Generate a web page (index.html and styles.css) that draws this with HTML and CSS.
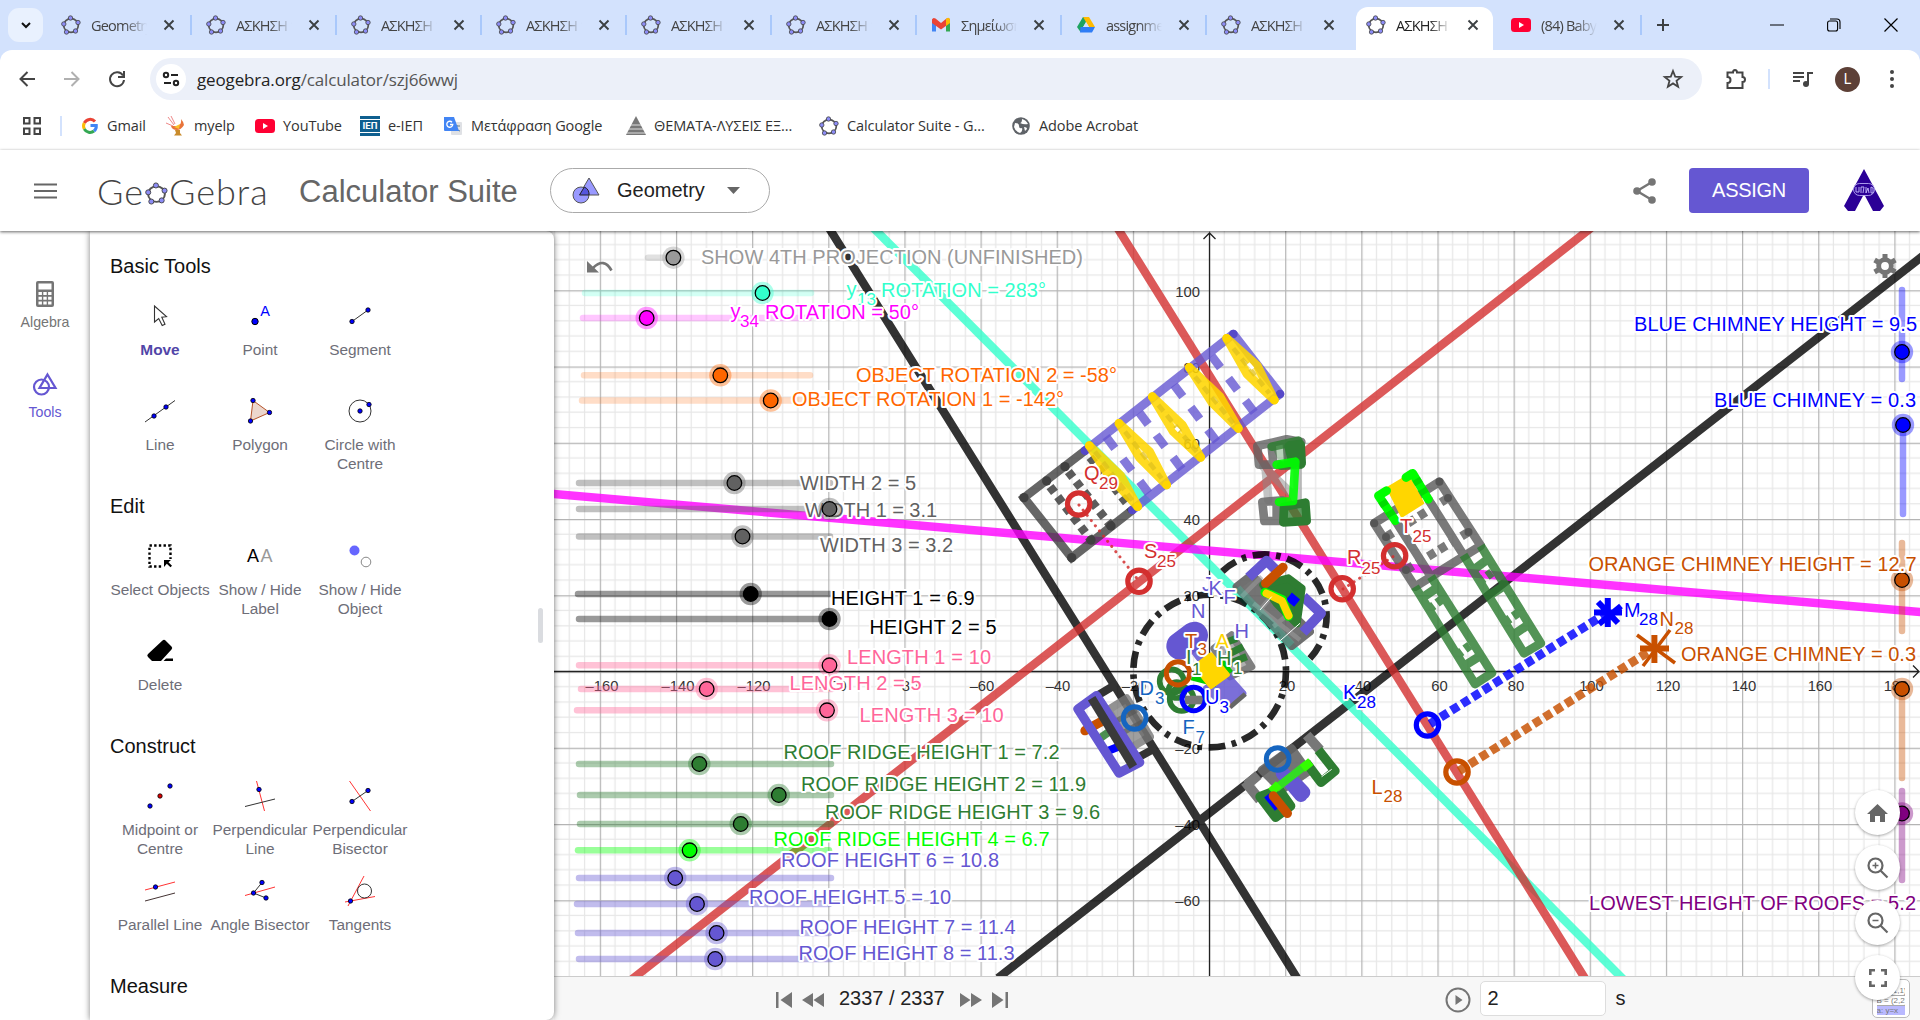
FILE: index.html
```html
<!DOCTYPE html>
<html lang="en">
<head>
<meta charset="utf-8">
<title>GeoGebra Calculator Suite</title>
<link rel="stylesheet" href="styles.css">
</head>
<body>
<svg class="defs" width="0" height="0">
  <symbol id="ggb" viewBox="0 0 20 20">
    <ellipse cx="10" cy="10.5" rx="7.3" ry="6.8" fill="none" stroke="#555" stroke-width="1.7"/>
    <g fill="#8c8cf5" stroke="#444" stroke-width=".8"><circle cx="9.5" cy="3" r="2.2"/><circle cx="17" cy="7.5" r="2.2"/><circle cx="14.5" cy="16" r="2.2"/><circle cx="5.5" cy="17" r="2.2"/><circle cx="2.8" cy="9" r="2.2"/></g>
  </symbol>
  <symbol id="yt" viewBox="0 0 20 20"><rect y="3" width="20" height="14" rx="3.5" fill="#ff0033"/><path d="M8 7v6l5-3z" fill="#fff"/></symbol>
  <symbol id="close" viewBox="0 0 12 12"><path d="M1.5 1.5l9 9M10.5 1.5l-9 9" stroke="#3c4043" stroke-width="1.9"/></symbol>
  <symbol id="knob" viewBox="0 0 24 24"><circle cx="12" cy="12" r="11.2" fill="currentColor" opacity=".4"/><circle cx="12" cy="12" r="7.3" fill="currentColor" stroke="#000" stroke-width="1.3"/></symbol>
  <symbol id="dot" viewBox="0 0 6 6"><circle cx="3" cy="3" r="2.2" fill="#00f" stroke="#000" stroke-width=".8"/></symbol>
</svg>

<div class="tabstrip">
  <div class="search-tabs"><svg width="12" height="12" viewBox="0 0 12 12"><path d="M2 4l4 4 4-4" fill="none" stroke="#111" stroke-width="2"/></svg></div>
  <div class="tabs">
    <div class="tab"><svg class="fav"><use href="#ggb"/></svg><span>Geometry</span><svg class="x"><use href="#close"/></svg></div>
    <div class="tab"><svg class="fav"><use href="#ggb"/></svg><span>ΑΣΚΗΣΗ 1</span><svg class="x"><use href="#close"/></svg></div>
    <div class="tab"><svg class="fav"><use href="#ggb"/></svg><span>ΑΣΚΗΣΗ 1</span><svg class="x"><use href="#close"/></svg></div>
    <div class="tab"><svg class="fav"><use href="#ggb"/></svg><span>ΑΣΚΗΣΗ 1</span><svg class="x"><use href="#close"/></svg></div>
    <div class="tab"><svg class="fav"><use href="#ggb"/></svg><span>ΑΣΚΗΣΗ 1</span><svg class="x"><use href="#close"/></svg></div>
    <div class="tab"><svg class="fav"><use href="#ggb"/></svg><span>ΑΣΚΗΣΗ 1</span><svg class="x"><use href="#close"/></svg></div>
    <div class="tab"><svg class="fav" viewBox="0 0 20 20"><path d="M1 4v12.500h4V9z" fill="#4285f4"/><path d="M19 4v12.500h-4V9z" fill="#34a853"/><path d="M1 8V4.500Q2 2 4.500 3.500L10 8l5.500-4.500Q18 2 19 4.500V8l-9 6.500z" fill="#ea4335"/><path d="M15 4q3-2.500 4 .5V8l-4 3z" fill="#fbbc04"/></svg><span>Σημείωση</span><svg class="x"><use href="#close"/></svg></div>
    <div class="tab"><svg class="fav" viewBox="0 0 20 20"><path d="M7 2h6l-8.500 15L1 12z" fill="#1ea362"/><path d="M7 2h6l6 10h-6z" fill="#ffba00"/><path d="M4.500 12H19l-3 5.500H4z" fill="#2f7df6"/><path d="M10 7l3 5H7z" fill="#d3e2fd"/></svg><span>assignments</span><svg class="x"><use href="#close"/></svg></div>
    <div class="tab"><svg class="fav"><use href="#ggb"/></svg><span>ΑΣΚΗΣΗ 1</span><svg class="x"><use href="#close"/></svg></div>
    <div class="tab active"><svg class="fav"><use href="#ggb"/></svg><span>ΑΣΚΗΣΗ 1</span><svg class="x"><use href="#close"/></svg></div>
    <div class="tab"><svg class="fav"><use href="#yt"/></svg><span>(84) Baby</span><svg class="x"><use href="#close"/></svg></div>
  </div>
  <svg class="plus" width="14" height="14" viewBox="0 0 14 14"><path d="M7 1v12M1 7h12" stroke="#3c4043" stroke-width="2"/></svg>
  <div class="winctl">
    <svg width="14" height="14" viewBox="0 0 14 14"><path d="M0 7h14" stroke="#000"/></svg>
    <svg width="14" height="14" viewBox="0 0 14 14" fill="none" stroke="#000" stroke-width="1.100"><rect x=".6" y="3" width="10" height="10" rx="2"/><path d="M3 1h7q3 0 3 3v7"/></svg>
    <svg width="14" height="14" viewBox="0 0 14 14"><path d="M.5.5l13 13M13.500.5l-13 13" stroke="#000" stroke-width="1.200"/></svg>
  </div>
</div>

<div class="toolbar">
  <div class="nav">
    <svg width="18" height="18" viewBox="0 0 18 18"><path d="M9.500 2L2.500 9l7 7M2.500 9H17" fill="none" stroke="#444" stroke-width="2"/></svg>
    <svg width="18" height="18" viewBox="0 0 18 18"><path d="M8.500 2l7 7-7 7M15.500 9H1" fill="none" stroke="#b0b0b0" stroke-width="2"/></svg>
    <svg width="18" height="18" viewBox="0 0 18 18"><path d="M15 5.500A7 7 0 1 0 16 10M16 1v6h-6" fill="none" stroke="#444" stroke-width="2"/></svg>
  </div>
  <div class="omnibox">
    <div class="site"><svg width="18" height="16" viewBox="0 0 18 16" fill="none" stroke="#222" stroke-width="2"><circle cx="4" cy="4" r="2.200"/><path d="M9 4h7M2 12h7"/><circle cx="14" cy="12" r="2.200"/></svg></div>
    <span class="url">geogebra.org<i>/calculator/szj66wwj</i></span>
    <svg class="star" width="20" height="20" viewBox="0 0 20 20"><path d="M10 2l2.200 5.600 6 .4-4.700 3.800 1.600 5.900L10 14.400l-5.100 3.300 1.600-5.900L1.800 8l6-.4z" fill="none" stroke="#444" stroke-width="1.800"/></svg>
  </div>
  <div class="actions">
    <svg width="22" height="22" viewBox="0 0 22 22"><path d="M2.500 4.500H8Q8 2 10 2t2 2.500h5.500V9Q20 9 20 11.500T17.500 14v6H2.500v-5q3 0 3-3t-3-3z" fill="none" stroke="#444" stroke-width="2"/></svg>
    <b class="vsep"></b>
    <svg class="music" width="20" height="18" viewBox="0 0 20 18"><path d="M0 3h11M0 7h11M0 11h7" stroke="#444" stroke-width="2"/><path d="M15 14V3h5" fill="none" stroke="#444" stroke-width="2"/><circle cx="13" cy="14" r="3" fill="#444"/></svg>
    <b class="avatar">L</b>
    <svg class="dots" width="6" height="20" viewBox="0 0 6 20" fill="#444"><circle cx="3" cy="3" r="2"/><circle cx="3" cy="10" r="2"/><circle cx="3" cy="17" r="2"/></svg>
  </div>
</div>

<div class="bookmarks">
  <svg class="apps" width="18" height="18" viewBox="0 0 18 18" fill="none" stroke="#444" stroke-width="2"><path d="M1 1h5.500v5.500H1zM11.500 1H17v5.500h-5.500zM1 11.500h5.500V17H1zM11.500 11.500H17V17h-5.500z"/></svg>
  <b class="vsep"></b>
  <svg class="b1" width="16" height="16" viewBox="0 0 16 16" fill="none" stroke-width="3"><path d="M13 3.500A6.500 6.500 0 0 0 2.300 5" stroke="#ea4335"/><path d="M2.300 5a6.500 6.500 0 0 0 0 6" stroke="#fbbc05"/><path d="M2.300 11A6.500 6.500 0 0 0 12 13" stroke="#34a853"/><path d="M12 13q2.500-2 2.300-5.500H8.500" stroke="#4285f4"/></svg>
  <span class="w1">Gmail</span>
  <svg class="b2" width="20" height="20" viewBox="0 0 20 20"><path d="M2 1l6 8M5 0l4 8M0 7l7 3" stroke="#e88" stroke-width="1"/><path d="M5 10q1 4 6 4 4 0 7-5-1-4-3-6 1 5-3 7-4 0-7 0z" fill="#e8743a"/><path d="M8 11l6-3-1 5z" fill="#fbc02d"/><path d="M9 14h5v3l2 2.500H8l2-2.500z" fill="#c98b2b"/></svg>
  <span class="w2">myelp</span>
  <svg class="b3" width="20" height="20"><use href="#yt"/></svg>
  <span class="w3">YouTube</span>
  <em class="iep">ΙΕΠ</em>
  <span class="w4">e-ΙΕΠ</span>
  <svg class="b5" width="20" height="20" viewBox="0 0 20 20"><rect x="8" y="6" width="11" height="13" rx="1" fill="#dfe1e5"/><path d="M11 10h6M14 9q0 4-3 6M12 11q2 4 5 4" stroke="#607d8b" fill="none"/><path d="M1 1h10l5 14H2q-1 0-1-1z" fill="#4285f4"/><path d="M9 6.200a3 3 0 1 0 .8 2.300H7" fill="none" stroke="#fff" stroke-width="1.300"/></svg>
  <span class="w5">Μετάφραση Google</span>
  <svg class="b6" width="20" height="20" viewBox="0 0 20 20"><path d="M10 0l10 19H0z" fill="#777"/><path d="M5 9h10M3 13h14M1 17h18" stroke="#ddd" stroke-width="1"/></svg>
  <span class="w6">ΘΕΜΑΤΑ-ΛΥΣΕΙΣ ΕΞ...</span>
  <svg class="b7" width="20" height="20"><use href="#ggb"/></svg>
  <span class="w7">Calculator Suite - G...</span>
  <svg class="b8" width="18" height="18" viewBox="0 0 18 18"><circle cx="9" cy="9" r="8.800" fill="#5f6368"/><path d="M3 6q4 0 4 3t3 2q1 3-2 5-5-2-6-6zM10 2q0 4-2 4 4 2 8 1-2-4-6-5zM12 10q3 0 3 2l-2 2z" fill="#fff"/></svg>
  <span class="w8">Adobe Acrobat</span>
</div>

<header class="appbar">
  <svg class="burger" width="23" height="16" viewBox="0 0 23 16"><path d="M0 1.500h23M0 8h23M0 14.500h23" stroke="#666" stroke-width="2.200"/></svg>
  <div class="logo"><span>Ge</span><svg width="23" height="23"><use href="#ggb"/></svg><span>Gebra</span></div>
  <h1>Calculator Suite</h1>
  <div class="picker">
    <svg width="28" height="27" viewBox="0 0 28 27" stroke="#555"><path d="M17 1l10 17H7z" fill="#9999ff"/><circle cx="9" cy="18" r="8" fill="#9999ff"/><path d="M12.300 10A8 8 0 0 1 17 18H7.500z" fill="#5555dd" stroke="#222"/></svg>
    <span>Geometry</span>
    <svg width="13" height="7" viewBox="0 0 13 7"><path d="M0 0h13L6.500 7z" fill="#666"/></svg>
  </div>
  <svg class="share" width="23" height="26" viewBox="0 0 23 26"><path d="M19 4L4 13l15 9" fill="none" stroke="#757575" stroke-width="2.400"/><g fill="#757575"><circle cx="19" cy="4" r="3.800"/><circle cx="4" cy="13" r="3.800"/><circle cx="19" cy="22" r="3.800"/></g></svg>
  <button class="assign">ASSIGN</button>
  <svg class="brand" width="40" height="43" viewBox="0 0 40 43"><path d="M20 0l20 37-4 5h-7l-9-17-9 17H4l-4-5z" fill="#2b0096"/><rect x="9.500" y="14.500" width="21" height="12" rx="6" fill="#2b0096" stroke="#c9bfff" stroke-width=".8"/><path d="M12 18v5h3v-5M17 24v-6h3l-1 6M22 18v6l2-5 1 5M27 18v6h2v-5z" fill="none" stroke="#c9bfff" stroke-width=".9"/></svg>
</header>

<main class="app">
  <nav class="rail">
    <div class="rail-item"><svg width="18" height="26" viewBox="0 0 18 26"><rect width="18" height="26" rx="2" fill="#757575"/><path d="M2.500 2.500h13v6h-13zM2.500 11h3.400v3H2.500zM7.300 11h3.400v3H7.300zM12.100 11h3.400v3h-3.400zM2.500 15.700h3.400v3H2.500zM7.300 15.700h3.400v3H7.300zM12.100 15.700h3.400v3h-3.400zM2.500 20.500h3.400v3H2.500zM7.300 20.500h3.400v3H7.300zM12.100 20.500h3.400v3h-3.400z" fill="#fff"/></svg><span>Algebra</span></div>
    <div class="rail-item on"><svg width="25" height="26" viewBox="0 0 25 26" fill="none" stroke="#6557d2" stroke-width="2.200"><circle cx="8.500" cy="16" r="7.500"/><path d="M14.500 3.500l8 13.500h-16z"/></svg><span>Tools</span></div>
  </nav>

  <aside class="panel">
    <section><h2>Basic Tools</h2><div class="grid">
      <div class="tool sel"><svg viewBox="0 0 32 32"><path d="M10.500 6v16l4.200-3.500 3.500 7 2.800-1.300-3.200-7 4.700-.5z" fill="#fff" stroke="#333" stroke-width="1.100"/></svg><span>Move</span></div>
      <div class="tool"><svg viewBox="0 0 32 32"><circle cx="11" cy="21.500" r="3.200" fill="#00f" stroke="#000"/><text x="16.300" y="16" class="ia">A</text></svg><span>Point</span></div>
      <div class="tool"><svg viewBox="0 0 32 32"><path d="M8 21.500L24 10" stroke="#333"/><use href="#dot" x="5" y="18.500" width="6" height="6"/><use href="#dot" x="21" y="7" width="6" height="6"/></svg><span>Segment</span></div>
      <div class="tool"><svg viewBox="0 0 32 32"><path d="M1 27L31 5.500" stroke="#333"/><use href="#dot" x="7" y="18" width="6" height="6"/><use href="#dot" x="19" y="9" width="6" height="6"/></svg><span>Line</span></div>
      <div class="tool"><svg viewBox="0 0 32 32"><path d="M9 5.500l16.500 12L6.500 26z" fill="#ecd6cd" stroke="#b5532a"/><use href="#dot" x="6" y="2.500" width="6" height="6"/><use href="#dot" x="22.500" y="14.500" width="6" height="6"/><use href="#dot" x="3.500" y="23" width="6" height="6"/></svg><span>Polygon</span></div>
      <div class="tool"><svg viewBox="0 0 32 32"><circle cx="16" cy="16" r="11" fill="none" stroke="#333"/><use href="#dot" x="13" y="13" width="6" height="6"/><use href="#dot" x="22" y="6.500" width="6" height="6"/></svg><span>Circle with<br>Centre</span></div>
    </div></section>
    <section><h2>Edit</h2><div class="grid">
      <div class="tool"><svg viewBox="0 0 32 32"><path d="M5.500 5.500h21v21h-21z" fill="none" stroke="#000" stroke-width="2.400" stroke-dasharray="2.400 2.270"/><path d="M19 19h10v10H19z" fill="#fff"/><path d="M20 20h7l-2.500 2.200 3.500 3.600-1.500 1.500-3.700-3.600L20 27z" fill="#000"/></svg><span>Select Objects</span></div>
      <div class="tool"><svg viewBox="0 0 32 32"><text x="3" y="22" class="aa">A</text><text x="16.500" y="22" class="aa g">A</text></svg><span>Show / Hide<br>Label</span></div>
      <div class="tool"><svg viewBox="0 0 32 32"><circle cx="10.500" cy="10.500" r="5" fill="#66f"/><circle cx="22" cy="22" r="4.800" fill="#fff" stroke="#888"/></svg><span>Show / Hide<br>Object</span></div>
      <div class="tool"><svg viewBox="0 0 32 32"><path d="M18.500 5.500q1.500-1.500 3 0l6 6q1.500 1.500 0 3L17 26H8l-4-4q-1.500-1.500 0-3z" fill="#000"/><path d="M22 23.500h7V26h-9.500z" fill="#000"/></svg><span>Delete</span></div>
    </div></section>
    <section><h2>Construct</h2><div class="grid">
      <div class="tool"><svg viewBox="0 0 32 32"><use href="#dot" x="3" y="23" width="6" height="6"/><circle cx="16" cy="16" r="2.200" fill="#d00" stroke="#000" stroke-width=".8"/><use href="#dot" x="23" y="3" width="6" height="6"/></svg><span>Midpoint or<br>Centre</span></div>
      <div class="tool"><svg viewBox="0 0 32 32"><path d="M12.500 1l8 30" stroke="#f33"/><path d="M1 26.500L31 19" stroke="#333"/><use href="#dot" x="12" y="6.500" width="6" height="6"/></svg><span>Perpendicular<br>Line</span></div>
      <div class="tool"><svg viewBox="0 0 32 32"><path d="M5.500 1l21 30" stroke="#f33"/><path d="M8 21.500L24 10.500" stroke="#333"/><use href="#dot" x="5" y="18.500" width="6" height="6"/><use href="#dot" x="21" y="7.500" width="6" height="6"/></svg><span>Perpendicular<br>Bisector</span></div>
      <div class="tool"><svg viewBox="0 0 32 32"><path d="M1 15L31 7" stroke="#f33"/><path d="M1 26L31 18" stroke="#433"/><use href="#dot" x="8.500" y="9" width="6" height="6"/></svg><span>Parallel Line</span></div>
      <div class="tool"><svg viewBox="0 0 32 32"><path d="M1 20.500L31 12" stroke="#f33"/><path d="M18 7.500L9.500 18l12.500 5" stroke="#333" fill="none"/><use href="#dot" x="15" y="4.500" width="6" height="6"/><use href="#dot" x="6.500" y="15" width="6" height="6"/><use href="#dot" x="19" y="20" width="6" height="6"/></svg><span>Angle Bisector</span></div>
      <div class="tool"><svg viewBox="0 0 32 32"><path d="M20 1L4 31M1 27l30-5.500" stroke="#f33"/><circle cx="20.500" cy="16" r="7" fill="none" stroke="#333"/><use href="#dot" x="3.500" y="23" width="6" height="6"/></svg><span>Tangents</span></div>
    </div></section>
    <section><h2>Measure</h2></section>
    <i class="thumb"></i>
  </aside>

  <div class="view">
    <svg class="graph" width="1366" height="745" viewBox="554 231 1366 745">
      <defs>
        <pattern id="grid" patternUnits="userSpaceOnUse" x="1209" y="671.500" width="76.150" height="76.250">
          <path d="M15.230 0V77M30.460 0V77M45.690 0V77M60.920 0V77M0 15.250H77M0 30.500H77M0 45.750H77M0 61H77" stroke="#000" stroke-opacity=".095" stroke-width="1.200"/>
          <path d="M.5 0V77M0 .5H77" stroke="#b4b4b4" stroke-width="1.400"/>
        </pattern>
      </defs>
      <rect x="554" y="231" width="1366" height="745" fill="#fff"/>
      <rect x="554" y="231" width="1366" height="745" fill="url(#grid)"/>
      <path d="M554 671.500H1919M1209.500 233V976M1203.500 239l6-6 6 6M1913 665.500l6 6-6 6" fill="none" stroke="#222" stroke-width="1.300"/>
      <g class="ax mid">
        <text x="602" y="691">–160</text><text x="678" y="691">–140</text><text x="754" y="691">–120</text><text x="830" y="691">–100</text><text x="906" y="691">–80</text><text x="982" y="691">–60</text><text x="1058" y="691">–40</text><text x="1134" y="691">–20</text><text x="1287" y="691">20</text><text x="1363" y="691">40</text><text x="1439.500" y="691">60</text><text x="1516" y="691">80</text><text x="1591.500" y="691">100</text><text x="1668" y="691">120</text><text x="1744" y="691">140</text><text x="1820" y="691">160</text><text x="1896" y="691">180</text>
      </g>
      <g class="ax end">
        <text x="1200" y="296.500">100</text><text x="1200" y="372.500">80</text><text x="1200" y="448.500">60</text><text x="1200" y="524.500">40</text><text x="1200" y="600.500">20</text><text x="1200" y="754">–20</text><text x="1200" y="830">–40</text><text x="1200" y="906">–60</text>
      </g>

      <g class="lines">
        <path d="M829 228L1297 978M998 978L1924 255" stroke="#000"/>
        <path d="M873.500 228L1624 980" stroke="#3fc"/>
        <path d="M1117.500 228L1586 980M1591 228L631 980" stroke="#d32f2f"/>
        <path d="M550 493.600L1924 612.400" stroke="#f0f"/>
      </g>

      <!-- elongated roof and its base -->
      <g transform="translate(1000 320) scale(.33333)" fill="none" stroke-width="26">
        <path d="M255 392L72 533l143 180 182-143" stroke="#404040" opacity=".8"/>
        <g stroke="#404040" opacity=".85" stroke-dasharray="22 16" stroke-width="26"><path d="M150 500l123 160M205 455l128 163M270 412l127 158"/></g>
        <g fill="#404040" stroke="none"><circle cx="72" cy="533" r="14"/><circle cx="215" cy="713" r="14"/><circle cx="195" cy="440" r="14"/><circle cx="140" cy="483" r="14"/><circle cx="273" cy="660" r="14"/><circle cx="333" cy="618" r="14"/></g>
        <path d="M255 392L700 42l140 180-443 348" stroke="#6557d2" opacity=".8" stroke-linejoin="round"/>
        <g fill="#5648c8" stroke="none"><circle cx="255" cy="392" r="13"/><circle cx="700" cy="42" r="13"/><circle cx="840" cy="222" r="13"/><circle cx="397" cy="570" r="13"/></g>
        <path d="M318 350l130 172M418 278l130 172M522 195l130 172M635 108l130 172" stroke="#6557d2" opacity=".8" stroke-dasharray="44 40"/>
        <g stroke="#ffd600" fill="#ffe04a" fill-opacity=".55" stroke-width="26" stroke-linejoin="round" opacity=".87">
          <path d="M268 377l94 90 51 93-88-95zM357 310l92 85 51 100-82-83zM457 230l90 85 55 97-82-77zM568 142l92 88 55 95-79-77zM680 55l92 82 51 103-82-78z"/>
        </g>
        <g stroke="#d8ba1c" stroke-width="14" stroke-dasharray="24 16" opacity=".6"><path d="M285 395l115 150M375 335l110 140M475 255l115 140M585 170l115 140M700 85l108 135"/></g>
        <path d="M527 323l10 10M745 130l14 16" stroke="#fff" stroke-width="10"/>
        <g stroke="#ffd600" stroke-width="26" stroke-linecap="round"><path d="M268 377h.1M413 560h.1M357 310h.1M500 495h.1M457 230h.1M602 412h.1M568 142h.1M715 325h.1M680 55h.1M823 240h.1"/></g>

        <!-- small house with lime ridge -->
        <g stroke-linejoin="round" stroke-linecap="round">
          <path d="M797 445l8 95M893 440v100M790 440l100 95" stroke="#888" opacity=".5"/>
          <path d="M772 378l88-20 44 8M772 378l5 56h60M860 360l5 70M815 380l5 50" stroke="#616161" opacity=".8"/>
          <path d="M787 546l6 57h60M787 546l60-5M830 550v50" stroke="#707070" opacity=".9"/>
          <path d="M815 380l80-18 8 72-60 3" stroke="#2e7d32" fill="#2e7d32" fill-opacity=".4" opacity=".85"/>
          <path d="M870 378l30-4 3 55M868 380l12 50" stroke="#2e7d32" stroke-width="30"/>
          <path d="M852 560l64-12 4 55-70 4z" stroke="#2e7d32" fill="#2e7d32" fill-opacity=".75"/>
          <path d="M830 434l56-9-7 118-42 3" stroke="#0f0" opacity=".9"/>
        </g>
      </g>

      <!-- houses round the origin -->
      <g transform="translate(1060 540) scale(.33333)" fill="none" stroke-linejoin="round">
        <g stroke="#000" stroke-opacity=".84" stroke-width="20" stroke-dasharray="50 20 14 20">
          <circle cx="449" cy="393" r="229"/>
          <path d="M487 94A184 184 0 0 1 742 363"/>
        </g>
        <g stroke-width="24">
          <path d="M530 140l45-35 175 170-55 43z" fill="#666" stroke="#616161" opacity=".9"/>
          <path d="M545 170l60-60M600 210l50-60M640 260l60-50M580 190l140 110" stroke="#999" opacity=".6" stroke-width="14"/>
          <path d="M532 145L695 315" stroke="#3fc" opacity=".2"/>
          <path d="M566 112l54-50 33 33M730 170l53 50-54 57" stroke="#6557d2" stroke-width="30"/>
          <path d="M610 135l75-20 40 30-15 105-60-60z" fill="#2e7d32" stroke="#2e7d32"/>
          <path d="M617 130l52-48" stroke="#c85000" stroke-linecap="round" stroke-width="28"/>
          <path d="M690 190l18-22" stroke="#00f" stroke-width="32"/>
          <path d="M615 157l52 22 18 50" stroke="#0f0" stroke-linecap="round" stroke-width="27"/><path d="M619 160l47 23 20 44" stroke="#ffd600" stroke-linecap="round" stroke-width="23"/>
          <path d="M600 210l35-40M640 320l80-70" stroke="#fff" stroke-width="3"/>
        </g>
        <path d="M360 318l43-32" stroke="#6557d2" stroke-width="82" stroke-linecap="round"/>
        <g stroke-width="22">
          <path d="M462 325l53-40 60 95-65 30z" stroke="#616161" fill="#9a9a9a" opacity=".8"/>
          <path d="M490 310l40-15M500 345l50-25M510 370l50-20" stroke="#2e7d32"/>
          <path d="M400 330l70 90M440 445l60 55 48-40-45-50z" stroke="#6557d2" fill="#6557d2" opacity=".85"/>
          <path d="M510 502l46-40" stroke="#666" stroke-width="14"/>
          <path d="M395 410l75 20M470 350l40 50" stroke="#0c0"/>
          <path d="M405 380l48-36 50 60-50 36z" fill="#ffd600" stroke="#ffd600" stroke-width="14"/>
        </g>
        <g stroke-width="15">
          <g stroke="#2e7d32" stroke-width="17"><circle cx="335" cy="424" r="36"/><circle cx="365" cy="477" r="36"/><circle cx="350" cy="450" r="24"/></g>
          <path d="M375 480h55" stroke="#777" stroke-width="26"/>
          <circle cx="354" cy="400" r="35" stroke="#c85000"/><circle cx="401" cy="477" r="35" stroke="#00f"/>
        </g>

        <!-- left house -->
        <g stroke-width="24">
          <path d="M115 465l50-30M230 655l58-32" stroke="#333"/>
          <path d="M145 510l55-35 70 115-60 35z" fill="#888" stroke="#777" opacity=".8"/><path d="M165 545l65-35M185 580l65-35" stroke="#555" stroke-width="16" opacity=".6"/>
          <path d="M75 572l50-28" stroke="#c85000" stroke-width="28" stroke-linecap="round"/>
          <path d="M105 605l50-35" stroke="#2e7d32" stroke-opacity=".85"/><path d="M145 632l30-12" stroke="#00f"/>
          <path d="M54 507l55-40 130 200-62 32z" stroke="#6557d2" stroke-width="28"/>
          <path d="M95 475l125 205" stroke="#3a3a3a" stroke-width="26"/>
        </g>
        <!-- lower right house -->
        <g stroke-width="24">
          <path d="M605 690l90-65 50 70-80 55z" fill="#666" stroke="#666" opacity=".9"/>
          <path d="M555 725l45 55M740 585l40 45M560 735l35-30" stroke="#777" stroke-width="30"/>
          <path d="M690 715l40 42M668 700l55 65" stroke="#6557d2" stroke-width="42" stroke-linecap="round"/>
          <path d="M600 770l47 62 45-34-35-50z" fill="#2e7d32" stroke="#2e7d32" stroke-width="28"/>
          <path d="M775 630l50 63-42 34-45-60" stroke="#2e7d32" stroke-width="28"/>
          <path d="M785 710l30-22" stroke="#fff" stroke-width="3"/>
          <path d="M648 745l92-72" stroke="#33dd22"/>
          <path d="M636 735l18 18M732 665l16 20" stroke="#3f0" stroke-width="32"/>
          <path d="M622 765l32 40" stroke="#00f" stroke-width="24"/>
          <path d="M640 768l42 52" stroke="#c85000" stroke-width="28" stroke-linecap="round"/>
        </g>
        <g stroke="#1565c0" stroke-width="15"><circle cx="224" cy="534" r="34"/><circle cx="653" cy="657" r="34"/></g>
      </g>

      <!-- right house with ladders -->
      <g fill="none" stroke-width="8.800" stroke-linejoin="round">
        <g stroke="#555" opacity=".78">
          <path d="M1439.400 481.700L1374.300 523.300L1415 586.700L1480.700 545.700Z"/><path d="M1395.400 520.700L1431 576.700M1428.300 499.300L1463.500 555"/>
          <path d="M1386 537L1448 498M1406 570L1468.500 532" stroke-dasharray="8 5"/>
        </g>
        <g fill="#555"><circle cx="1439.400" cy="481.700" r="4"/><circle cx="1374.300" cy="523.300" r="4"/><circle cx="1448" cy="498" r="4"/><circle cx="1468.500" cy="532" r="4"/><circle cx="1386" cy="537" r="4"/><circle cx="1406" cy="570" r="4"/></g>
        <g stroke="#2e7d32" opacity=".82">
          <path d="M1415 586.700L1475 684L1492 673L1431 576.700M1463.500 555L1524 653.300L1540.800 643.300L1480.700 545.700"/>
          <path d="M1422 598L1438 587M1464 666L1480 656M1472 571L1488 559M1487 597L1504 586M1513 635L1528 625"/>
          <path d="M1429 609L1445 597M1457 655L1473 643M1479 582L1494 571M1505 622L1521 611" stroke-dasharray="6 4"/>
        </g>
        <path d="M1388 488l20-12 14.600 27-20.600 13z" fill="#ffd600" stroke="#ffd600" stroke-width="3"/>
        <path d="M1395.400 520.700L1378.500 495.700l8-5M1406 477.500l6.600-4.200L1428.300 499.300" stroke="#0f0" stroke-linecap="round"/>
        <path d="M1382 501l3 5M1389 511l3 5M1416 479l3 5M1422 489l3 5" stroke="#0b0" opacity=".5"/>
      </g>

      <g fill="none" stroke-width="8.800" opacity=".82"><path d="M1430 724L1607.800 612.300" stroke="#00f" stroke-dasharray="8.400 4.200"/><path d="M1459 771L1654.400 648.300" stroke="#c85000" stroke-dasharray="8.400 4.200"/></g>
      <path d="M1607.800 598v29M1594 612.500h28M1598 602l20 21M1599 624l22-18" stroke="#00f" stroke-width="6"/>
      <path d="M1654.400 635v28M1640 648.500h29" stroke="#c85000" stroke-width="6"/><path d="M1637 635l38 28M1670 630l-27 36" stroke="#c85000" stroke-width="3.500"/>
      <g fill="none" stroke-width="5.200">
        <g stroke="#d32f2f"><circle cx="1078.700" cy="504" r="11.200"/><circle cx="1139" cy="581.300" r="11.200"/><circle cx="1342.200" cy="588.700" r="11.200"/><circle cx="1394.600" cy="555.700" r="11.200"/></g>
        <circle cx="1427.500" cy="725" r="11.200" stroke="#00f"/><circle cx="1457" cy="772" r="11.200" stroke="#c85000"/>
      </g>
      <path d="M1079 505L1139 581M1343 589L1394 556" stroke="#d32f2f" stroke-width="3" stroke-linecap="round" stroke-dasharray=".1 6.500" opacity=".85"/>

      <g class="tracks">
        <g class="lt"><path d="M648 257.700H673" stroke="#777"/><path d="M585 293H811" stroke="#3fc"/><path d="M583 318H809" stroke="#f0f"/><path d="M584 375.300H810M582 400.500H808" stroke="#f60"/></g>
        <path d="M579 483H830M579 509H830M579 536.500H830" stroke="#616161"/><path d="M578 594H830M579 619H830" stroke="#000"/>
        <path d="M579 665.300H830M581 689H832M577 710.300H828" stroke="#f69"/>
        <path d="M579 764H831M580 795H831M580 824H831" stroke="#2e7d32"/><path d="M578 850.300H829" stroke="#0f0"/>
        <path d="M579 878H831M577 904H829M578 933H829M579 959H831" stroke="#6557d2"/>
        <path d="M1902 290V379M1903 425V514" stroke="#00f"/><path d="M1902 543V631M1902 689V778" stroke="#c85000"/><path d="M1902 791V880" stroke="#800080"/>
      </g>
      <g>
        <use href="#knob" class="c-g9" x="661.400" y="245.700" width="24" height="24"/>
        <use href="#knob" class="c-cy" x="750.500" y="281" width="24" height="24"/>
        <use href="#knob" class="c-mg" x="634.700" y="306" width="24" height="24"/>
        <use href="#knob" class="c-or" x="708.300" y="363.300" width="24" height="24"/>
        <use href="#knob" class="c-or" x="758.700" y="388.500" width="24" height="24"/>
        <use href="#knob" class="c-gr" x="722.400" y="471" width="24" height="24"/>
        <use href="#knob" class="c-gr" x="730.500" y="524.500" width="24" height="24"/>
        <use href="#knob" class="c-bk" x="738.700" y="582" width="24" height="24"/>
        <use href="#knob" class="c-bk" x="817.500" y="607" width="24" height="24"/>
        <use href="#knob" class="c-pk" x="817.500" y="653.300" width="24" height="24"/>
        <use href="#knob" class="c-pk" x="694.700" y="677" width="24" height="24"/>
        <use href="#knob" class="c-pk" x="815" y="698.300" width="24" height="24"/>
        <use href="#knob" class="c-gn" x="687.300" y="752" width="24" height="24"/>
        <use href="#knob" class="c-gn" x="766.800" y="783" width="24" height="24"/>
        <use href="#knob" class="c-gn" x="728.700" y="812" width="24" height="24"/>
        <use href="#knob" class="c-lm" x="677.600" y="838.300" width="24" height="24"/>
        <use href="#knob" class="c-pu" x="663.200" y="866" width="24" height="24"/>
        <use href="#knob" class="c-pu" x="685" y="892" width="24" height="24"/>
        <use href="#knob" class="c-pu" x="704.600" y="921" width="24" height="24"/>
        <use href="#knob" class="c-pu" x="703.200" y="947" width="24" height="24"/>
        <use href="#knob" class="c-bl" x="1890" y="340" width="24" height="24"/>
        <use href="#knob" class="c-bl" x="1891" y="413" width="24" height="24"/>
        <use href="#knob" class="c-oc" x="1890" y="568" width="24" height="24"/>
        <use href="#knob" class="c-oc" x="1890" y="677" width="24" height="24"/>
        <use href="#knob" class="c-vi" x="1890" y="801.500" width="24" height="24"/>
      </g>

      <g class="lab">
        <text class="c-g9" x="701" y="263.700" textLength="382">SHOW 4TH PROJECTION (UNFINISHED)</text>
        <text class="c-cy" x="846.500" y="295.500">y</text><text class="c-cy sub" x="857" y="304.500">13</text><text class="c-cy" x="881" y="297" textLength="165">ROTATION = 283°</text>
        <text class="c-mg" x="730.500" y="318">y</text><text class="c-mg sub" x="740" y="326.700">34</text><text class="c-mg" x="765" y="319" textLength="154">ROTATION = 50°</text>
        <text class="c-or" x="856" y="382" textLength="261">OBJECT ROTATION 2 = -58°</text>
        <text class="c-or" x="792" y="405.700" textLength="272">OBJECT ROTATION 1 = -142°</text>
        <text class="c-gr" x="800" y="489.700" textLength="116">WIDTH 2 = 5</text>
        <text class="c-gr" x="805" y="516.700" textLength="132">WIDTH 1 = 3.1</text>
        <text class="c-gr" x="820" y="551.700" textLength="133">WIDTH 3 = 3.2</text>
        <text class="c-bk" x="831" y="604.700" textLength="143.500">HEIGHT 1 = 6.9</text>
        <text class="c-bk" x="869.500" y="633.700" textLength="127">HEIGHT 2 = 5</text>
        <text class="c-pk" x="847" y="663.700" textLength="144">LENGTH 1 = 10</text>
        <text class="c-pk" x="789.500" y="689.700" textLength="132">LENGTH 2 = 5</text>
        <text class="c-pk" x="859.500" y="721.700" textLength="144">LENGTH 3 = 10</text>
        <text class="c-gn" x="783.500" y="758.700" textLength="276">ROOF RIDGE HEIGHT 1 = 7.2</text>
        <text class="c-gn" x="801" y="790.700" textLength="285">ROOF RIDGE HEIGHT 2 = 11.9</text>
        <text class="c-gn" x="825" y="819" textLength="275">ROOF RIDGE HEIGHT 3 = 9.6</text>
        <text class="c-lm" x="773.500" y="846" textLength="276">ROOF RIDGE HEIGHT 4 = 6.7</text>
        <text class="c-pu" x="781" y="867" textLength="218">ROOF HEIGHT 6 = 10.8</text>
        <text class="c-pu" x="749" y="903.700" textLength="202">ROOF HEIGHT 5 = 10</text>
        <text class="c-pu" x="799.500" y="934" textLength="216">ROOF HEIGHT 7 = 11.4</text>
        <text class="c-pu" x="798.500" y="959.700" textLength="216">ROOF HEIGHT 8 = 11.3</text>
        <text class="c-bl" x="1634" y="330.700" textLength="283">BLUE CHIMNEY HEIGHT = 9.5</text>
        <text class="c-bl" x="1714" y="407" textLength="202">BLUE CHIMNEY = 0.3</text>
        <text class="c-oc" x="1588.500" y="571" textLength="328">ORANGE CHIMNEY HEIGHT = 12.7</text>
        <text class="c-oc" x="1681" y="661" textLength="235">ORANGE CHIMNEY = 0.3</text>
        <text class="c-vi" x="1589" y="910" textLength="327">LOWEST HEIGHT OF ROOFS = 5.2</text>
        <g class="c-rd">
          <text x="1084" y="480">Q</text><text class="sub" x="1099" y="489">29</text>
          <text x="1144" y="557.700">S</text><text class="sub" x="1157" y="566.500">25</text>
          <text x="1400" y="533.300">T</text><text class="sub" x="1412.500" y="541.500">25</text>
          <text x="1347" y="564.300">R</text><text class="sub" x="1361.500" y="574">25</text>
        </g>
        <g class="c-bl">
          <text x="1624" y="616.700">M</text><text class="sub" x="1639" y="625.300">28</text>
          <text x="1343" y="699.300">K</text><text class="sub" x="1357" y="708.300">28</text>
          <text x="1205" y="703.700">U</text><text class="sub" x="1219.500" y="712.700">3</text>
        </g>
        <g class="c-oc">
          <text x="1659.500" y="625.600">N</text><text class="sub" x="1674.500" y="634.300">28</text>
          <text x="1371.500" y="793.700">L</text><text class="sub" x="1383.500" y="801.700">28</text>
          <text x="1185" y="648.300">T</text><text class="sub" x="1197.500" y="655">3</text>
        </g>
        <g class="c-pu"><text x="1202" y="591">J</text><text x="1208.500" y="595">K</text><text x="1223.500" y="604">F</text><text x="1191" y="617.700">N</text><text x="1234.500" y="637.700">H</text></g>
        <g class="c-gn"><text x="1186" y="664">I</text><text class="sub" x="1192" y="675">1</text><text x="1217" y="665">H</text><text class="sub" x="1233" y="674">1</text></g>
        <text class="c-ye" x="1215.500" y="648.300">A</text>
        <g class="c-db"><text x="1139.500" y="695.300">D</text><text class="sub" x="1155" y="703.700">3</text><text x="1182.500" y="734.300">F</text><text class="sub" x="1195.500" y="743">7</text></g>
        <use href="#knob" class="c-gr" x="817.500" y="497" width="24" height="24"/>
      </g>
    </svg>

    <svg class="undo" width="26" height="12" viewBox="0 0 26 12"><path d="M0 0v11.500h12z" fill="#757575"/><path d="M6 7Q17-4 24.500 9.500" fill="none" stroke="#757575" stroke-width="2.600"/></svg>
    <svg class="gear" width="24" height="24" viewBox="0 0 24 24"><circle cx="12" cy="12" r="6.300" fill="none" stroke="#757575" stroke-width="4.800"/><g stroke="#757575" stroke-width="5"><path d="M12 0v5M12 19v5M1.600 6l4.300 2.500M18.100 15.500l4.300 2.500M1.600 18l4.300-2.500M18.100 8.500L22.400 6"/></g></svg>

    <div class="fabs">
      <b><svg width="21" height="18" viewBox="0 0 21 18"><path d="M10.500 0L21 10h-3v8h-5v-6H8v6H3v-8H0z" fill="#666"/></svg></b>
      <b><svg width="22" height="22" viewBox="0 0 22 22" fill="none" stroke="#666" stroke-width="2.200"><circle cx="8.500" cy="8.500" r="7"/><path d="M13.500 13.500l7 7"/><path d="M8.500 5.500v6M5.500 8.500h6" stroke-width="1.500"/></svg></b>
      <b><svg width="22" height="22" viewBox="0 0 22 22" fill="none" stroke="#666" stroke-width="2.200"><circle cx="8.500" cy="8.500" r="7"/><path d="M13.500 13.500l7 7"/><path d="M5.500 8.500h6" stroke-width="1.500"/></svg></b>
      <b><svg width="18" height="18" viewBox="0 0 18 18" fill="none" stroke="#666" stroke-width="2.600"><path d="M6 1.300H1.300V6M12 1.300h4.700V6M6 16.700H1.300V12M12 16.700h4.700V12"/></svg></b>
    </div>

    <div class="steps">
      <svg width="16" height="16" viewBox="0 0 16 16" fill="#757575"><path d="M0 0h2.500v16H0zM16 0v16L4.500 8z"/></svg>
      <svg width="22" height="14" viewBox="0 0 22 14" fill="#757575"><path d="M11 0v14L0 7zM22 0v14L11.500 7z"/></svg>
      <span>2337 / 2337</span>
      <svg width="22" height="14" viewBox="0 0 22 14" fill="#757575"><path d="M0 0v14l10.500-7zM11 0v14l11-7z"/></svg>
      <svg width="16" height="16" viewBox="0 0 16 16" fill="#757575"><path d="M13.500 0H16v16h-2.500zM0 0v16l11.500-8z"/></svg>
      <svg class="play" width="26" height="26" viewBox="0 0 26 26"><circle cx="13" cy="13" r="11.500" fill="none" stroke="#757575" stroke-width="2"/><path d="M10.500 8v10l7-5z" fill="#757575"/></svg>
      <div class="speed">2</div><span class="unit">s</span>
      <div class="kbd"><span>a = (1,1)</span><span>B = (2,2)</span><span class="hl">a: y=x</span></div>
    </div>
  </div>
</main>
</body>
</html>
```
FILE: styles.css
```css
* { box-sizing: border-box; }
body { margin: 0; width: 1920px; height: 1020px; overflow: hidden; background: #d3e2fd; font-family: "Liberation Sans", Arial, sans-serif; display: flex; flex-direction: column; }
svg { display: block; flex: none; overflow: visible; }
.defs { position: absolute; }

/* browser chrome */
.tabstrip { height: 50px; flex: none; display: flex; align-items: center; font-family: "Open Sans", "Noto Sans", sans-serif; }
.search-tabs { width: 35px; height: 34px; margin-left: 8px; border-radius: 11px; background: #e9f1fe; display: flex; align-items: center; justify-content: center; }
.tabs { display: flex; margin-left: 4px; }
.tab { width: 145px; height: 50px; padding: 0 15px 0 14px; display: flex; align-items: center; background: linear-gradient(#a9c8fb, #a9c8fb) right center / 2px 20px no-repeat; }
.fav { width: 20px; height: 20px; }
.tab span { margin-left: 10px; width: 56px; overflow: hidden; white-space: nowrap; font-size: 14.500px; letter-spacing: -.8px; color: #444; -webkit-mask-image: linear-gradient(90deg, #000 60%, transparent); mask-image: linear-gradient(90deg, #000 60%, transparent); }
.x { width: 12px; height: 12px; margin-left: 16px; }
.tab.active { width: 137px; height: 43px; margin: 7px 4px 0; padding: 0 14px 7px 10px; background: #fff; border-radius: 12px 12px 0 0; }
.tab.active span { color: #222; }
.tab:has(+ .active) { background: none; }
.plus { margin-left: 14px; }
.winctl { margin-left: auto; margin-right: 22px; display: flex; gap: 43px; }

.toolbar { height: 58px; flex: none; background: #fff; border-radius: 12px 12px 0 0; display: flex; align-items: center; }
.nav { display: flex; gap: 27px; width: 150px; padding-left: 18px; }
.omnibox { width: 1552px; height: 42px; border-radius: 21px; background: #ecf0f9; display: flex; align-items: center; padding: 0 19px 0 6px; }
.site { width: 30px; height: 30px; border-radius: 50%; background: #fff; display: flex; align-items: center; justify-content: center; }
.url { margin-left: 11px; font: 17px "Open Sans", "Noto Sans", sans-serif; letter-spacing: -.15px; color: #222; }
.url i { font-style: normal; color: #555; }
.star { margin-left: auto; }
.actions { display: flex; align-items: center; }
.actions > svg:first-child { margin-left: 23px; }
.vsep { width: 2px; height: 20px; background: #d3e2fd; }
.actions .vsep { margin: 0 23px 0 21px; }
.avatar { width: 25px; height: 25px; margin-left: 22px; border-radius: 50%; background: #5d4037; color: #fff; font: 14px/25px Roboto, sans-serif; text-align: center; }
.dots { margin-left: 29px; }

.bookmarks { height: 42px; flex: none; padding: 0 0 7px 23px; background: #fff; display: flex; align-items: center; font: 14.500px "Open Sans", "Noto Sans", sans-serif; letter-spacing: -.1px; color: #333; white-space: nowrap; }
.bookmarks .vsep { margin-left: 19px; }
.b1 { margin-left: 20px; }
.bookmarks span { margin-left: 9px; flex: none; }
.w1 { width: 59px; } .w2 { width: 61px; } .w3 { width: 77px; } .w4 { width: 55px; } .w5 { width: 155px; } .w6 { width: 165px; } .w7 { width: 165px; }
.bookmarks .w2 { margin-left: 8px; } .bookmarks .w3, .bookmarks .w4, .bookmarks .w5, .bookmarks .w6, .bookmarks .w7 { margin-left: 8px; }
.iep { width: 20px; height: 20px; background: #0f5f8f; color: #fff; font: bold 9.500px/14px Roboto, sans-serif; letter-spacing: 0; text-align: center; border: 3px solid #0f5f8f; border-width: 3px 0; box-shadow: inset 0 1px #fff, inset 0 -1px #fff; }

/* application header */
.appbar { height: 81px; flex: none; position: relative; z-index: 3; background: #fff; box-shadow: 0 1px 3px rgba(0,0,0,.6); display: flex; align-items: center; }
.burger { margin-left: 34px; }
.logo { width: 202px; margin-left: 40px; display: flex; align-items: center; font: 300 36px Lato, "Liberation Sans", sans-serif; color: #444; }
.logo svg { margin: 5px 1px 0 1px; }
.logo span { letter-spacing: 1px; }
.appbar h1 { margin: 2px 0 0; font-weight: 400; font-size: 31px; color: #666; width: 251px; white-space: nowrap; }
.picker { width: 220px; height: 45px; border: 1px solid #aaa; border-radius: 23px; display: flex; align-items: center; padding-left: 21px; font-size: 20px; color: #222; }
.picker span { width: 110px; margin-left: 17px; margin-top: -1px; }
.share { margin-left: 863px; }
.assign { width: 120px; height: 45px; margin-left: 33px; border: 0; border-radius: 4px; background: #6557d2; color: #fff; font: 400 20px "Liberation Sans", sans-serif; letter-spacing: -.3px; }
.brand { margin-left: 35px; }

/* side panels */
.app { flex: 1; min-height: 0; display: flex; background: #fff; }
.rail { width: 90px; flex: none; padding-top: 50px; background: #fff; display: flex; flex-direction: column; gap: 44px; }
.rail-item { display: flex; flex-direction: column; align-items: center; gap: 7px; font-size: 14.200px; color: #757575; }
.rail-item svg { height: 26px; }
.rail-item { height: 46px; }
.rail-item.on { color: #6557d2; }
.panel { width: 464px; flex: none; position: relative; z-index: 2; padding: 10px 0 0 20px; background: #fff; border-radius: 0 8px 8px 0; overflow: hidden; box-shadow: 0 0 6px rgba(0,0,0,.5); }
.panel h2 { margin: 0; font-weight: 400; font-size: 20px; line-height: 50px; height: 50px; color: #111; }
.panel .grid { display: grid; grid-template-columns: repeat(3, 100px); grid-auto-rows: 95px; }
.panel section { height: 240px; }
.tool { display: flex; flex-direction: column; align-items: center; padding-top: 9px; font-size: 15.400px; line-height: 19px; color: #6e6e78; text-align: center; white-space: nowrap; }
.tool svg { width: 32px; height: 32px; margin-bottom: 8px; }
.tool.sel { color: #5145a8; font-weight: 700; }
.ia { font: 14.500px "Liberation Sans"; fill: #00f; }
.aa { font: 18px "Liberation Sans"; fill: #000; }
.aa.g { fill: #999; }
.thumb { position: absolute; right: 11px; top: 377px; width: 5px; height: 35px; border-radius: 3px; background: #dadce0; }

/* construction view */
.view { flex: 1; min-width: 0; position: relative; display: flex; flex-direction: column; }
.graph { overflow: hidden; }
.ax { font-size: 14.800px; fill: #333; }
.mid { text-anchor: middle; }
.end { text-anchor: end; }
.lines { fill: none; stroke-width: 8.400px; stroke-opacity: .8; }
.tracks { fill: none; stroke-width: 6.500px; stroke-linecap: round; stroke-opacity: .4; }
.lt { stroke-opacity: .22; }
.lab { font-size: 20px; }
.lab text { fill: currentColor; stroke: #fff; stroke-width: 4px; stroke-linejoin: round; paint-order: stroke; }
.lab .sub { font-size: 17px; }
.c-g9 { color: #999; } .c-cy { color: #3fc; } .c-mg { color: #f0f; } .c-or { color: #f60; } .c-gr { color: #616161; } .c-bk { color: #000; } .c-pk { color: #f69; } .c-gn { color: #2e7d32; } .c-lm { color: #0f0; } .c-pu { color: #6557d2; } .c-bl { color: #00f; } .c-oc { color: #c85000; } .c-vi { color: #800080; } .c-rd { color: #d32f2f; } .c-ye { color: #ffd600; } .c-db { color: #1565c0; }
.undo { position: absolute; left: 33px; top: 30px; }
.gear { position: absolute; right: 23px; top: 23px; }
.fabs { position: absolute; right: 20px; top: 559px; z-index: 2; display: flex; flex-direction: column; gap: 10px; }
.fabs b { width: 45px; height: 45px; border-radius: 50%; background: #fff; box-shadow: 0 1px 3px rgba(0,0,0,.35); display: flex; align-items: center; justify-content: center; }
.steps { flex: 1; background: #f7f7f7; border-top: 1px solid #ccc; display: flex; align-items: center; padding: 3px 0 0 222px; font-size: 20px; color: #222; }
.steps svg + svg { margin-left: 10px; }
.steps span { margin: -3px 15px 0; width: 106px; white-space: nowrap; }
.steps .play { margin-left: 437px !important; }
.speed { width: 126px; height: 35px; margin: -4px 0 0 8.500px; border: 1px solid #ddd; border-radius: 5px; background: #fff; padding-left: 7px; line-height: 33px; }
.steps .unit { width: 11px; margin: -3px 0 0 10px; }
.kbd { width: 38px; height: 39px; margin: -3px 0 0 245px; border: 1px solid #bbb; border-radius: 5px; background: #fff; font-size: 8px; line-height: 9px; padding: 6px 4px; display: flex; flex-direction: column; color: #777; overflow: hidden; }
.kbd span { margin: 0; width: 28px; border-bottom: 1px solid #aaa; flex: none; overflow: hidden; }
.kbd .hl { background: #b9b9ff; border: 0; }
```
